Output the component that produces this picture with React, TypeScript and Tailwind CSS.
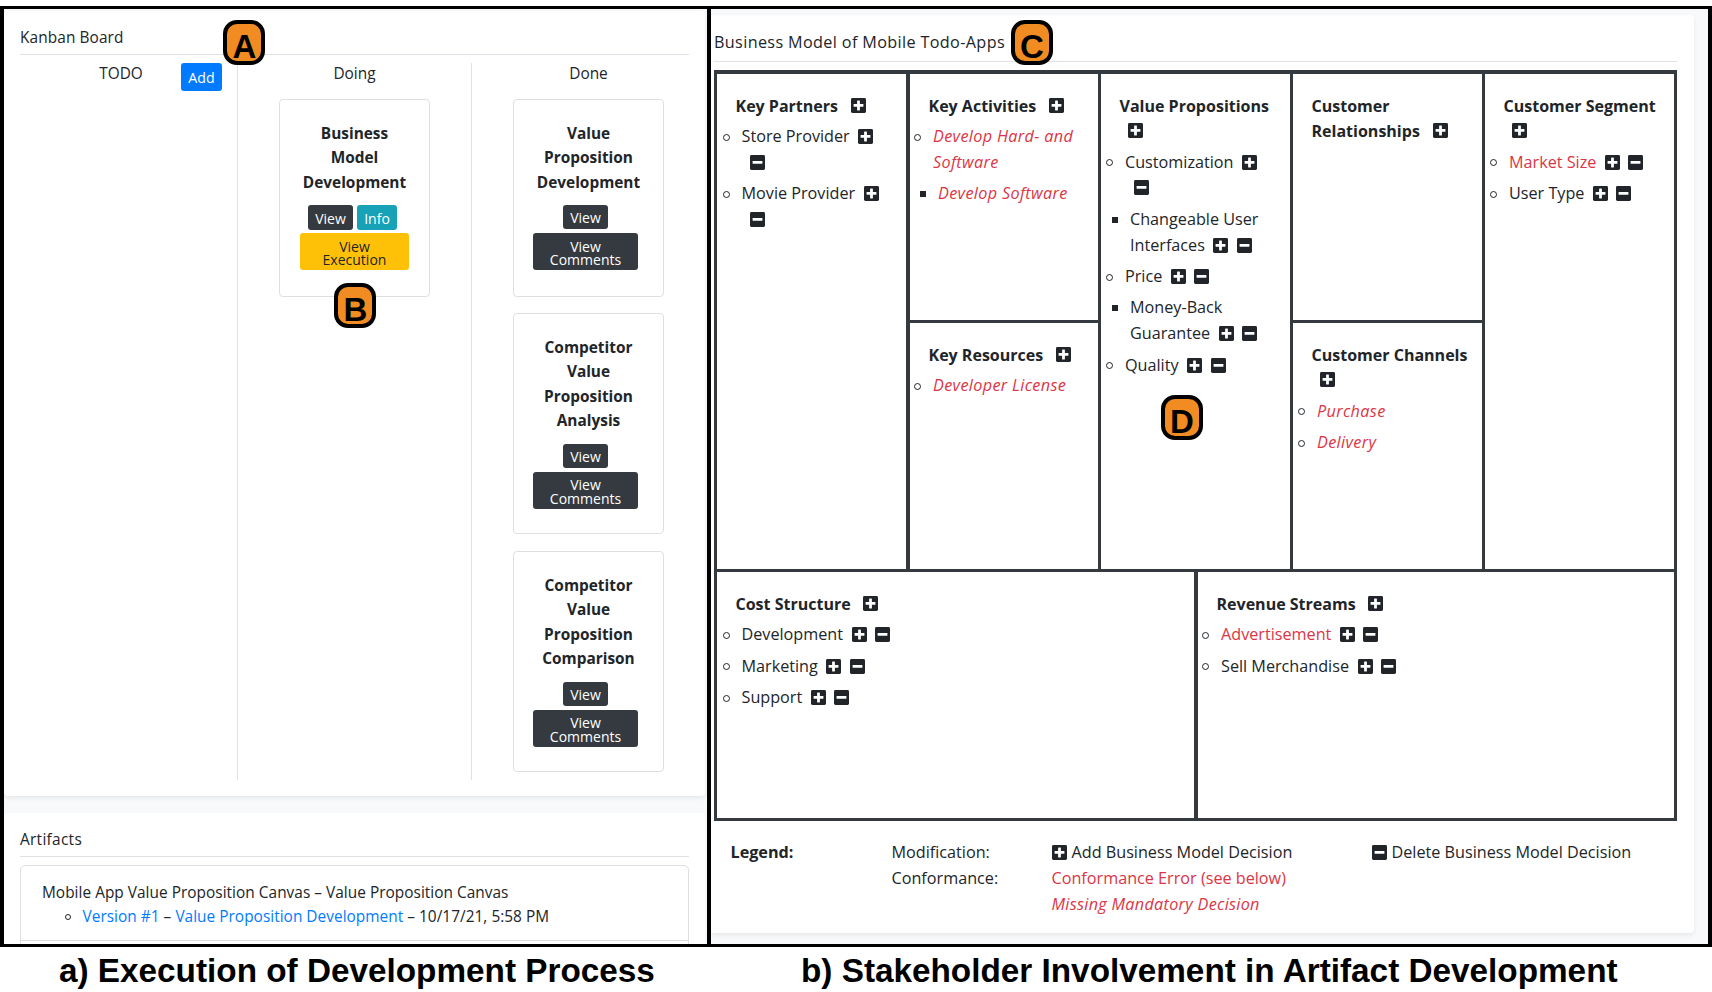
import type { ReactNode } from "react";

function Icon({ kind, className = "ml-[8.5px]" }: { kind: "plus" | "minus"; className?: string }) {
  return (
    <svg viewBox="0 0 15 15" className={`inline-block h-[15px] w-[15px] shrink-0 align-[-2px] ${className}`}>
      <rect width="15" height="15" rx="1.4" fill="#212529" />
      <rect x="2.6" y="6" width="9.8" height="2.8" rx="0.4" fill="#fff" />
      {kind === "plus" && <rect x="6.1" y="2.6" width="2.8" height="9.8" rx="0.4" fill="#fff" />}
    </svg>
  );
}

function Badge({ letter, className }: { letter: string; className: string }) {
  return (
    <div
      className={`absolute z-10 h-[45px] w-[42px] rounded-[14px] border-4 border-black bg-[#f08c22] pt-[4px] pl-px text-center font-['Liberation_Sans',sans-serif] text-[33px] leading-[37px] font-bold text-black ${className}`}
    >
      {letter}
    </div>
  );
}

function TaskCard({ title, children, className }: { title: string[]; children: ReactNode; className: string }) {
  return (
    <div className={`flex w-[151px] flex-col items-center rounded-[4px] border border-[#dfdfdf] pt-[22px] ${className}`}>
      <div className="text-center text-[15.4px] leading-[24.4px] font-bold">
        {title.map((line) => (
          <div key={line}>{line}</div>
        ))}
      </div>
      {children}
    </div>
  );
}

const btn = "flex items-center justify-center rounded-[3px] text-center text-[14px] text-white";

function DoneButtons() {
  return (
    <div className="mr-[6px] flex flex-col items-center">
      <div className={`${btn} mt-[10px] h-[24px] w-[45px] bg-[#343a40] pt-px`}>View</div>
      <div className={`${btn} mt-1 h-[37px] w-[105px] bg-[#343a40] pt-[3px] leading-[13.7px]`}>
        View
        <br />
        Comments
      </div>
    </div>
  );
}

type Entry = { lines: string[]; level?: 2; tone?: "error" | "missing"; wrap?: boolean };

function Item({ lines, level, tone, wrap }: Entry) {
  const color = tone ? "text-[#dc3545]" : "";
  const style = tone === "missing" ? "italic tracking-[0.35px]" : "";
  return (
    <div className={`mb-[5.8px] flex ${level ? "pl-[11px]" : "pl-[5.5px]"}`}>
      {level ? (
        <span className="mt-[10px] mr-[12.5px] size-[6px] shrink-0 bg-[#212529]" />
      ) : (
        <span className="mt-[9.5px] mr-[12px] size-[7px] shrink-0 rounded-full border border-[#212529]" />
      )}
      <div className="whitespace-nowrap">
        {lines.map((line, i) => (
          <div key={line} className="h-[25.67px]">
            <span className={`${color} ${style}`}>{line}</span>
            {i === lines.length - 1 && tone !== "missing" && (
              <>
                <Icon kind="plus" />
                {!wrap && <Icon kind="minus" />}
              </>
            )}
          </div>
        ))}
        {wrap && (
          <div className="h-[25.67px]">
            <Icon kind="minus" />
          </div>
        )}
      </div>
    </div>
  );
}

function Cell({
  title,
  wrap,
  items = [],
  className = "",
  listClass = "",
}: {
  title: string[];
  wrap?: boolean;
  items?: Entry[];
  className?: string;
  listClass?: string;
}) {
  return (
    <div className={`border-[#343a40] pt-[19.7px] leading-[25.67px] ${className}`}>
      <div className="mb-[4.8px] pl-[18.5px] text-[16.02px] font-bold whitespace-nowrap">
        {title.map((line, i) => (
          <div key={line} className="h-[25.67px]">
            {line}
            {i === title.length - 1 && !wrap && <Icon kind="plus" className="ml-[12.7px] -translate-y-px" />}
          </div>
        ))}
        {wrap && (
          <div className="h-[25.67px]">
            <Icon kind="plus" className="ml-[8.5px] -translate-y-px" />
          </div>
        )}
      </div>
      <div className={listClass}>
        {items.map((it) => (
          <Item key={it.lines[0]} {...it} />
        ))}
      </div>
    </div>
  );
}

function KanbanPanel() {
  return (
    <div className="h-[935px] w-[703px] overflow-hidden bg-[#f8f9fa] pt-[2px] text-[15.4px]">
      <section className="h-[785px] w-[701px] rounded-[4px] bg-white px-4 pt-[10px] shadow-[0_2px_4px_rgba(0,0,0,0.075)]">
        <h1 className="h-[34px] border-b border-[#dee2e6] leading-[33px] tracking-[0.1px]">Kanban Board</h1>
        <div className="-mx-4 mt-[8px] flex h-[717px]">
          <div className="flex w-[234px] border-r border-[#dee2e6]">
            <div className="w-[177px] pl-[57px] text-center leading-[22px]">TODO</div>
            <div className="flex h-[28px] w-[41px] items-center justify-center rounded-[3px] bg-[#007bff] pt-[2px] text-[14.2px] text-white">
              Add
            </div>
          </div>
          <div className="flex w-[234px] flex-col items-center border-r border-[#dee2e6]">
            <div className="h-[20px] leading-[22px]">Doing</div>
            <TaskCard title={["Business", "Model", "Development"]} className="mt-4 h-[198px]">
              <div className="mt-[10px] mr-1 flex gap-1">
                <div className={`${btn} h-[25px] w-[45px] bg-[#343a40] pt-px`}>View</div>
                <div className={`${btn} h-[25px] w-[40px] bg-[#17a2b8] pt-px`}>Info</div>
              </div>
              <div className={`${btn} mt-[3px] h-[37px] w-[109px] bg-[#ffc107] pt-[3px] leading-[13.7px] text-[#212529]!`}>
                View
                <br />
                Execution
              </div>
            </TaskCard>
          </div>
          <div className="flex w-[233px] flex-col items-center">
            <div className="h-[20px] leading-[22px]">Done</div>
            <TaskCard title={["Value", "Proposition", "Development"]} className="mt-4 h-[198px]">
              <DoneButtons />
            </TaskCard>
            <TaskCard title={["Competitor", "Value", "Proposition", "Analysis"]} className="mt-4 h-[221px]">
              <DoneButtons />
            </TaskCard>
            <TaskCard title={["Competitor", "Value", "Proposition", "Comparison"]} className="mt-[17px] h-[221px]">
              <DoneButtons />
            </TaskCard>
          </div>
        </div>
      </section>
      <section className="mt-[17px] h-[200px] w-[701px] rounded-[4px] bg-white px-4 pt-[10px]">
        <h2 className="h-[34px] border-b border-[#dee2e6] leading-[33px] font-medium tracking-[0.3px]">Artifacts</h2>
        <div className="mt-[8px] h-[120px] rounded-[5px] border border-[#dfdfdf] leading-[24.3px]">
          <div className="h-[75px] border-b border-[#dfdfdf] pt-[15px] pl-[21px]">
            <div className="tracking-[0.03px]">Mobile App Value Proposition Canvas – Value Proposition Canvas</div>
            <div className="flex items-center pl-[23px] tracking-[0.03px]">
              <span className="mr-[11.5px] size-[6px] rounded-full border border-[#212529]" />
              <span>
                <span className="text-[#007bff]">Version #1</span> –{" "}
                <span className="text-[#007bff]">Value Proposition Development</span> – 10/17/21, 5:58 PM
              </span>
            </div>
          </div>
        </div>
      </section>
    </div>
  );
}

function CanvasPanel() {
  return (
    <div className="h-[935px] w-[997px] overflow-hidden bg-[#f8f9fa] pt-[6px] text-[16.2px]">
      <section className="h-[918px] w-[983px] rounded-r-[4px] bg-white pl-[3px] shadow-[0_2px_4px_rgba(0,0,0,0.075)]">
        <h1 className="h-[47px] w-[963px] border-b border-[#dee2e6] leading-[55px] tracking-[0.36px]">
          Business Model of Mobile Todo-Apps
        </h1>
        <div className="mt-[8px] h-[751px] w-[963px] border-[3px] border-t-4 border-[#343a40]">
          <div className="flex h-[498px] border-b-[3px] border-[#343a40]">
            <Cell
              title={["Key Partners"]}
              className="w-[193px] border-r-4"
              items={[
                { lines: ["Store Provider"], wrap: true },
                { lines: ["Movie Provider"], wrap: true },
              ]}
            />
            <div className="w-[191px] border-r-[3px] border-[#343a40]">
              <Cell
                title={["Key Activities"]}
                className="h-[249px] border-b-[3px]"
                listClass="-ml-[1.5px]"
                items={[
                  { lines: ["Develop Hard- and", "Software"], tone: "missing" },
                  { lines: ["Develop Software"], level: 2, tone: "missing" },
                ]}
              />
              <Cell
                title={["Key Resources"]}
                listClass="-ml-[1.5px]"
                items={[{ lines: ["Developer License"], tone: "missing" }]}
              />
            </div>
            <Cell
              title={["Value Propositions"]}
              wrap
              className="w-[192px] border-r-[3px]"
              listClass="-ml-[0.5px]"
              items={[
                { lines: ["Customization"], wrap: true },
                { lines: ["Changeable User", "Interfaces"], level: 2 },
                { lines: ["Price"] },
                { lines: ["Money-Back", "Guarantee"], level: 2 },
                { lines: ["Quality"] },
              ]}
            />
            <div className="w-[192px] border-r-[3px] border-[#343a40]">
              <Cell title={["Customer", "Relationships"]} className="h-[249px] border-b-[3px]" />
              <Cell
                title={["Customer Channels"]}
                wrap
                listClass="-ml-[0.5px]"
                items={[
                  { lines: ["Purchase"], tone: "missing" },
                  { lines: ["Delivery"], tone: "missing" },
                ]}
              />
            </div>
            <Cell
              title={["Customer Segment"]}
              wrap
              className="w-[189px]"
              listClass="-ml-[0.5px]"
              items={[{ lines: ["Market Size"], tone: "error" }, { lines: ["User Type"] }]}
            />
          </div>
          <div className="flex h-[246px]">
            <Cell
              title={["Cost Structure"]}
              className="w-[481px] border-r-4"
              items={[{ lines: ["Development"] }, { lines: ["Marketing"] }, { lines: ["Support"] }]}
            />
            <Cell
              title={["Revenue Streams"]}
              listClass="-ml-[1.5px]"
              items={[{ lines: ["Advertisement"], tone: "error" }, { lines: ["Sell Merchandise"] }]}
            />
          </div>
        </div>
        <div className="mt-[19px] grid grid-cols-[161px_160px_320px_1fr] pl-[16.5px] leading-[25.8px] whitespace-nowrap">
          <div className="font-bold">Legend:</div>
          <div>
            <div>Modification:</div>
            <div>Conformance:</div>
          </div>
          <div>
            <div>
              <Icon kind="plus" className="mr-[5px]" />
              Add Business Model Decision
            </div>
            <div className="text-[#dc3545]">Conformance Error (see below)</div>
            <div className="tracking-[0.3px] text-[#dc3545] italic">Missing Mandatory Decision</div>
          </div>
          <div>
            <Icon kind="minus" className="mr-[5px]" />
            Delete Business Model Decision
          </div>
        </div>
      </section>
    </div>
  );
}

export default function App() {
  return (
    <div className="relative h-[992px] w-[1712px] overflow-hidden bg-white pt-[6px] font-['Open_Sans',sans-serif] text-[#212529]">
      <div className="flex h-[941px] gap-[4px] border-x-4 border-y-[3px] border-black bg-black">
        <KanbanPanel />
        <CanvasPanel />
      </div>
      <div className="flex h-[45px] font-['Liberation_Sans',sans-serif] text-[33.3px] leading-[47px] font-bold whitespace-nowrap text-black">
        <div className="w-[742px] pl-[59px]">a) Execution of Development Process</div>
        <div className="pl-[59px]">b) Stakeholder Involvement in Artifact Development</div>
      </div>
      <Badge letter="A" className="top-[20px] left-[223px]" />
      <Badge letter="B" className="top-[283px] left-[334px]" />
      <Badge letter="C" className="top-[20px] left-[1010.5px]" />
      <Badge letter="D" className="top-[395px] left-[1160.5px]" />
    </div>
  );
}
